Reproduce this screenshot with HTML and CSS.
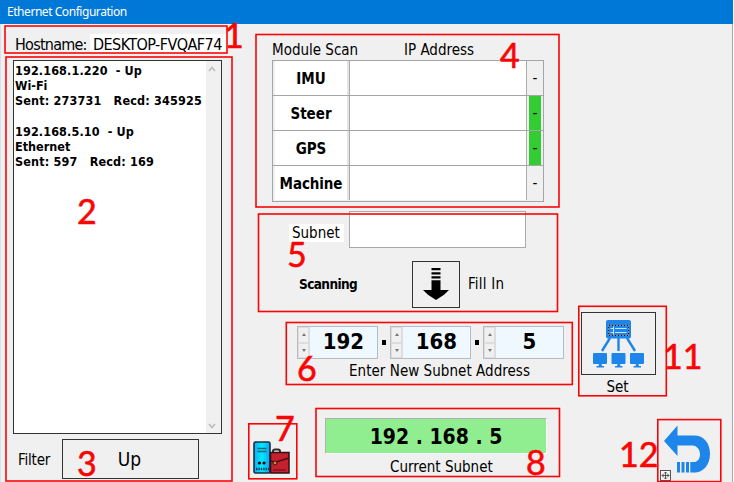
FILE: index.html
```html
<!DOCTYPE html>
<html lang="en">
<head>
<meta charset="utf-8">
<title>Ethernet Configuration</title>
<link rel="stylesheet" href="styles.css">
</head>
<body>
<div class="window">
<header class="titlebar">Ethernet Configuration</header>
<main class="content">
  <section class="adapters">
    <div class="host"><span class="host-label">Hostname:</span><span class="host-name">DESKTOP-FVQAF74</span></div>
    <div class="list">
      <div class="list-text"><span class="l1">192.168.1.220  - Up</span>
<span class="l2">Wi-Fi</span>
<span class="l3">Sent: 273731   Recd: 345925</span>

<span class="l1">192.168.5.10  - Up</span>
<span class="l2">Ethernet</span>
<span class="l3">Sent: 597   Recd: 169</span></div>
      <div class="scroll">
        <svg width="8" height="6" viewBox="0 0 8 6"><path d="M1 5 4 1.5 7 5"/></svg>
        <svg width="8" height="6" viewBox="0 0 8 6"><path d="M1 1 4 4.5 7 1"/></svg>
      </div>
    </div>
    <div class="filter"><span class="filter-label">Filter</span><button class="filter-btn">Up</button></div>
  </section>

  <section class="middle">
    <div class="scan-head"><span class="h-scan">Module Scan</span><span class="h-ip">IP Address</span></div>
    <div class="modules">
      <div class="row"><b class="imu">IMU</b><i></i><span>-</span></div>
      <div class="row on"><b class="steer">Steer</b><i></i><span>-</span></div>
      <div class="row on"><b class="gps">GPS</b><i></i><span>-</span></div>
      <div class="row"><b class="machine">Machine</b><i></i><span>-</span></div>
    </div>
    <div class="subnet"><span class="subnet-label">Subnet</span><div class="subnet-box"></div></div>
    <div class="scanning">
      <b class="scan-text">Scanning</b>
      <button class="fill-btn"><svg width="26" height="34" viewBox="0 0 26 34"><path d="M8.500 1h9v2.200h-9zM8.500 5.300h9v2.200h-9zM8.500 9.200h9v2.200h-9zM8.500 13.300h9v9.700H26L21 27.800 13 33 5 27.800 0 23h8.500z"/></svg></button>
      <span class="fill-text">Fill In</span>
    </div>
    <div class="spinners">
      <div class="spin"><div class="arrows"><i></i><i></i></div><b>192</b></div>
      <span class="dot"></span>
      <div class="spin"><div class="arrows"><i></i><i></i></div><b>168</b></div>
      <span class="dot"></span>
      <div class="spin"><div class="arrows"><i></i><i></i></div><b>5</b></div>
    </div>
    <div class="enter"><span>Enter New Subnet Address</span></div>
    <div class="current">
      <svg class="kit" width="38" height="34" viewBox="0 0 38 34">
        <defs><linearGradient id="tower"><stop offset="0" stop-color="#16a9f2"/><stop offset=".5" stop-color="#00ecff"/><stop offset="1" stop-color="#119ff0"/></linearGradient></defs>
        <rect x="1" y="1" width="16" height="31" rx="1.500" fill="url(#tower)" stroke="#17313f" stroke-width="1.600"/>
        <path d="M4.500 7.500h9M4.500 10.500h9" stroke="#12677d" stroke-width="1.400"/>
        <path d="M3 28h13" stroke="#103a5c" stroke-width="2.500" stroke-dasharray="1.400 1"/>
        <circle cx="6.500" cy="22" r="1.600"/><circle cx="11" cy="22" r="1.600"/>
        <path d="M20 11.500v-1q0-2 2-2h3q2 0 2 2v1" fill="none" stroke="#302b2d" stroke-width="2"/>
        <path d="M17.500 11.500H36v20.500H17.500z" fill="#c5202d" stroke="#321015" stroke-width="1.500"/>
        <path d="M17.500 19.500l4 2 14.500-4.500" fill="none" stroke="#4d0d15" stroke-width="1.500"/>
        <circle cx="22" cy="22" r="2" fill="#d58b27" stroke="#321015"/>
        <path d="M20 29h13" stroke="#5c1018"/>
      </svg>
      <div class="current-col"><div class="current-box"><b>192 . 168 . 5</b></div><span class="current-label">Current Subnet</span></div>
    </div>
  </section>

  <section class="actions">
    <button class="set-btn"><svg width="54" height="50" viewBox="0 0 54 50">
      <g fill="#1e86ea"><rect x="14" y="1" width="25" height="18.500" rx="2"/>
      <path d="M2 34h12q1 0 1 1v9q0 1-1 1H9.500l.5 2h2v1.500H4.500V47h2l.5-2H2q-1 0-1-1v-9q0-1 1-1zM20.500 34h12q1 0 1 1v9q0 1-1 1H28l.5 2h2v1.500H23V47h2l.5-2h-5q-1 0-1-1v-9q0-1 1-1zM39 34h12q1 0 1 1v9q0 1-1 1h-4.500l.5 2h2v1.500h-7.500V47h2l.5-2h-5q-1 0-1-1v-9q0-1 1-1z"/></g>
      <path d="M18 19 10 32M26.500 19v13M35 19 43 32" fill="none" stroke="#1e86ea" stroke-width="2.400"/>
      <rect x="16.500" y="6.500" width="20" height="10" fill="#1e86ea" stroke="#fff"/><rect x="16.500" y="6.500" width="20" height="10" fill="none" stroke="#111" stroke-dasharray="2 1"/>
      <path d="M18.500 9.500h2.500M18.500 13.500h2.500M23 9.500h11.500M23 13.500h11.500M21.500 7.500v8" stroke="#c5e2ff" stroke-width="1"/>
    </svg></button>
    <span class="set-label">Set</span>
    <svg class="back" width="52" height="57" viewBox="0 0 52 57">
      <path d="M4 17 17.500 1.500v10H34C44 11.500 50 19 50 30S43 48.500 34.500 48.500V38C38.500 37.500 40 34 40 30s-3-8.500-7.500-8.500H17.500v10.500z" fill="#1e86ea"/>
      <path d="M17 38h3v10.500h-3zM21.500 38h3v10.500h-3zM26 38h3v10.500h-3zM30.300 38h4.700v10.500h-4.700z" fill="#1e86ea"/>
      <rect x=".5" y="46.500" width="10" height="10" fill="#f4f4f4" stroke="#555"/>
      <path d="M5.500 48v7M2 51.500h7M4 49.500l1.500-1.500L7 49.500M4 53.500l1.500 1.500L7 53.500M3.500 50 2 51.500 3.500 53M7.500 50 9 51.500 7.500 53" fill="none" stroke="#333" stroke-width=".8"/>
    </svg>
  </section>
</main>
<svg class="notes" width="734" height="482" viewBox="0 0 734 482">
  <g fill="none" stroke="#fa0505" stroke-width="1.600">
    <rect x="5" y="26" width="222" height="27"/><rect x="6" y="57" width="226" height="424"/>
    <rect x="256" y="34.500" width="303" height="172.500"/><rect x="258.500" y="214" width="299" height="97.500"/>
    <rect x="286.300" y="322.500" width="286" height="62"/><rect x="578.800" y="306.300" width="87.500" height="89.500"/>
    <rect x="248.800" y="423.800" width="48" height="55"/><rect x="316" y="408.500" width="243.500" height="68"/>
    <rect x="657.800" y="419.600" width="63" height="62"/>
  </g>
  <g class="digits">
    <text x="224" y="48">1</text><text x="77" y="224">2</text><text x="77" y="476">3</text><text x="500" y="68">4</text>
    <text x="287" y="267">5</text><text x="297" y="381">6</text><text x="275" y="441">7</text><text x="526" y="475">8</text>
    <text x="663" y="369">11</text><text x="619" y="467">12</text>
  </g>
</svg>
</div>
</body>
</html>
```
FILE: styles.css
```css
* { box-sizing: border-box; }
body { margin: 0; font-family: "DejaVu Sans Condensed", "DejaVu Sans", sans-serif; font-stretch: condensed; color: #000; }
button { padding: 0; border: 1px solid #333; background: #f0f0f0; font: inherit; display: flex; align-items: center; justify-content: center; }
.window { position: relative; width: 734px; height: 482px; overflow: hidden; background: #f0f0f0; border-right: 1px solid #fff; white-space: nowrap; }
.titlebar { height: 24px; background: #0078d7; color: #fff; font: 12px/24px "Noto Sans", sans-serif; padding-left: 7px; letter-spacing: -.45px; }
.content { display: flex; height: 458px; border-left: 1px solid #d5e1ee; border-right: 1px solid #aaa; }
.adapters { width: 249px; padding: 10px 0 0 12px; }
.host { display: flex; height: 19px; font-size: 16px; line-height: 21px; }
.host-label { width: 77px; padding-left: 2px; letter-spacing: -.75px; }
.host-name { width: 137px; padding-left: 3px; background: #fff; letter-spacing: -.55px; }
.list { display: flex; width: 209px; height: 374px; margin-top: 7px; background: #fff; border: 1px solid #333; }
.list-text { flex: 1; padding: 2px 0 0 1px; font-size: 12.500px; font-weight: bold; line-height: 15.200px; white-space: pre; }
.l1 { letter-spacing: .12px; }
.l3 { letter-spacing: .16px; }
.scroll { width: 15px; background: #f0f0f0; display: flex; flex-direction: column; justify-content: space-between; align-items: center; padding: 5px 3px 4px 0; }
.scroll svg { fill: none; stroke: #bbb; stroke-width: 1.600; }
.filter { display: flex; margin-top: 5px; height: 40px; align-items: center; }
.filter-label { width: 49px; padding: 2px 0 0 5px; font-size: 15px; letter-spacing: -.2px; }
.filter-btn { width: 137px; height: 40px; font-size: 19px; padding-right: 2px; }
.middle { width: 323px; }
.scan-head { display: flex; height: 36px; padding: 16px 0 0 22px; font-size: 15px; line-height: 20px; }
.h-scan { width: 132px; }
.modules { width: 272px; margin-left: 22px; border: 1px solid #a5a5a5; }
.row { display: grid; grid-template-columns: 76px 178px 16px; grid-template-rows: 34px; height: 35px; border-bottom: 1px solid #a5a5a5; line-height: 34px; text-align: center; }
.row:last-child { border: 0; }
.row b { background: #fff; border-left: 2px solid #f0f0f0; border-right: 2px solid #e5e5e5; font-size: 15px; padding-top: 1px; overflow: hidden; }
.row i { background: #fff; border-left: 1px solid #aaa; border-right: 1px solid #aaa; }
.row span { font-size: 15px; margin: 0 2px; }
.row .machine { letter-spacing: -.1px; }
.row.on span { background: #32cd32; }
.subnet { display: flex; margin: 9px 0 0 39px; height: 38px; }
.subnet-label { width: 55px; height: 18px; margin: 13px 5px 0 0; padding-left: 3px; background: #fff; font-size: 15px; line-height: 18px; }
.subnet-box { width: 177px; height: 37px; background: #fff; border: 1px solid #aaa; }
.scanning { display: flex; align-items: center; height: 48px; margin: 11px 0 0 49px; }
.scan-text { width: 113px; font-size: 13.500px; letter-spacing: -.6px; }
.fill-btn { width: 48px; height: 47px; }
.fill-text { margin-left: 8px; font-size: 15px; letter-spacing: .2px; }
.spinners { display: flex; align-items: center; height: 33px; margin: 18px 0 0 47px; }
.spin { display: flex; width: 81px; height: 33px; border: 1px solid #b5bcc4; background: #f0f8ff; }
.spin b { flex: 1; text-align: center; font-size: 22px; line-height: 30px; }
.arrows { width: 12px; display: flex; flex-direction: column; background: #f0f0f0; border-right: 1px solid #ddd; }
.arrows i { flex: 1; display: flex; align-items: center; justify-content: center; border: 1px solid #ddd; }
.arrows i::before { content: ""; border: 2px solid transparent; border-top: 0; border-bottom: 3px solid #777; }
.arrows i:last-child::before { border-bottom: 0; border-top: 3px solid #777; }
.dot { width: 4px; height: 5px; margin: 0 4px; background: #000; }
.enter { height: 22px; margin: 1px 0 0 99px; font-size: 15px; line-height: 22px; letter-spacing: .04px; }
.current { display: flex; margin: 36px 0 0 3px; height: 65px; }
.kit { margin: 23px 34px 0 0; }
.current-box { width: 222px; height: 36px; background: #90ee90; border: 1px solid #b0b0b0; border-right-color: #fff; border-bottom-color: #fff; display: flex; align-items: center; justify-content: center; font-size: 21px; padding-top: 2px; }
.current-label { display: block; padding-left: 65px; line-height: 27px; font-size: 15px; }
.actions { padding: 288px 0 0 8px; width: 150px; }
.set-btn { width: 75px; height: 63px; }
.set-label { display: block; width: 73px; height: 24px; line-height: 25px; text-align: center; font-size: 15px; }
.back { display: block; margin: 25px 0 0 79px; }
.notes { position: absolute; left: 0; top: 0; }
.digits { fill: #f90505; stroke: #f90505; stroke-width: .6px; font: 34px Lato, sans-serif; }
```
